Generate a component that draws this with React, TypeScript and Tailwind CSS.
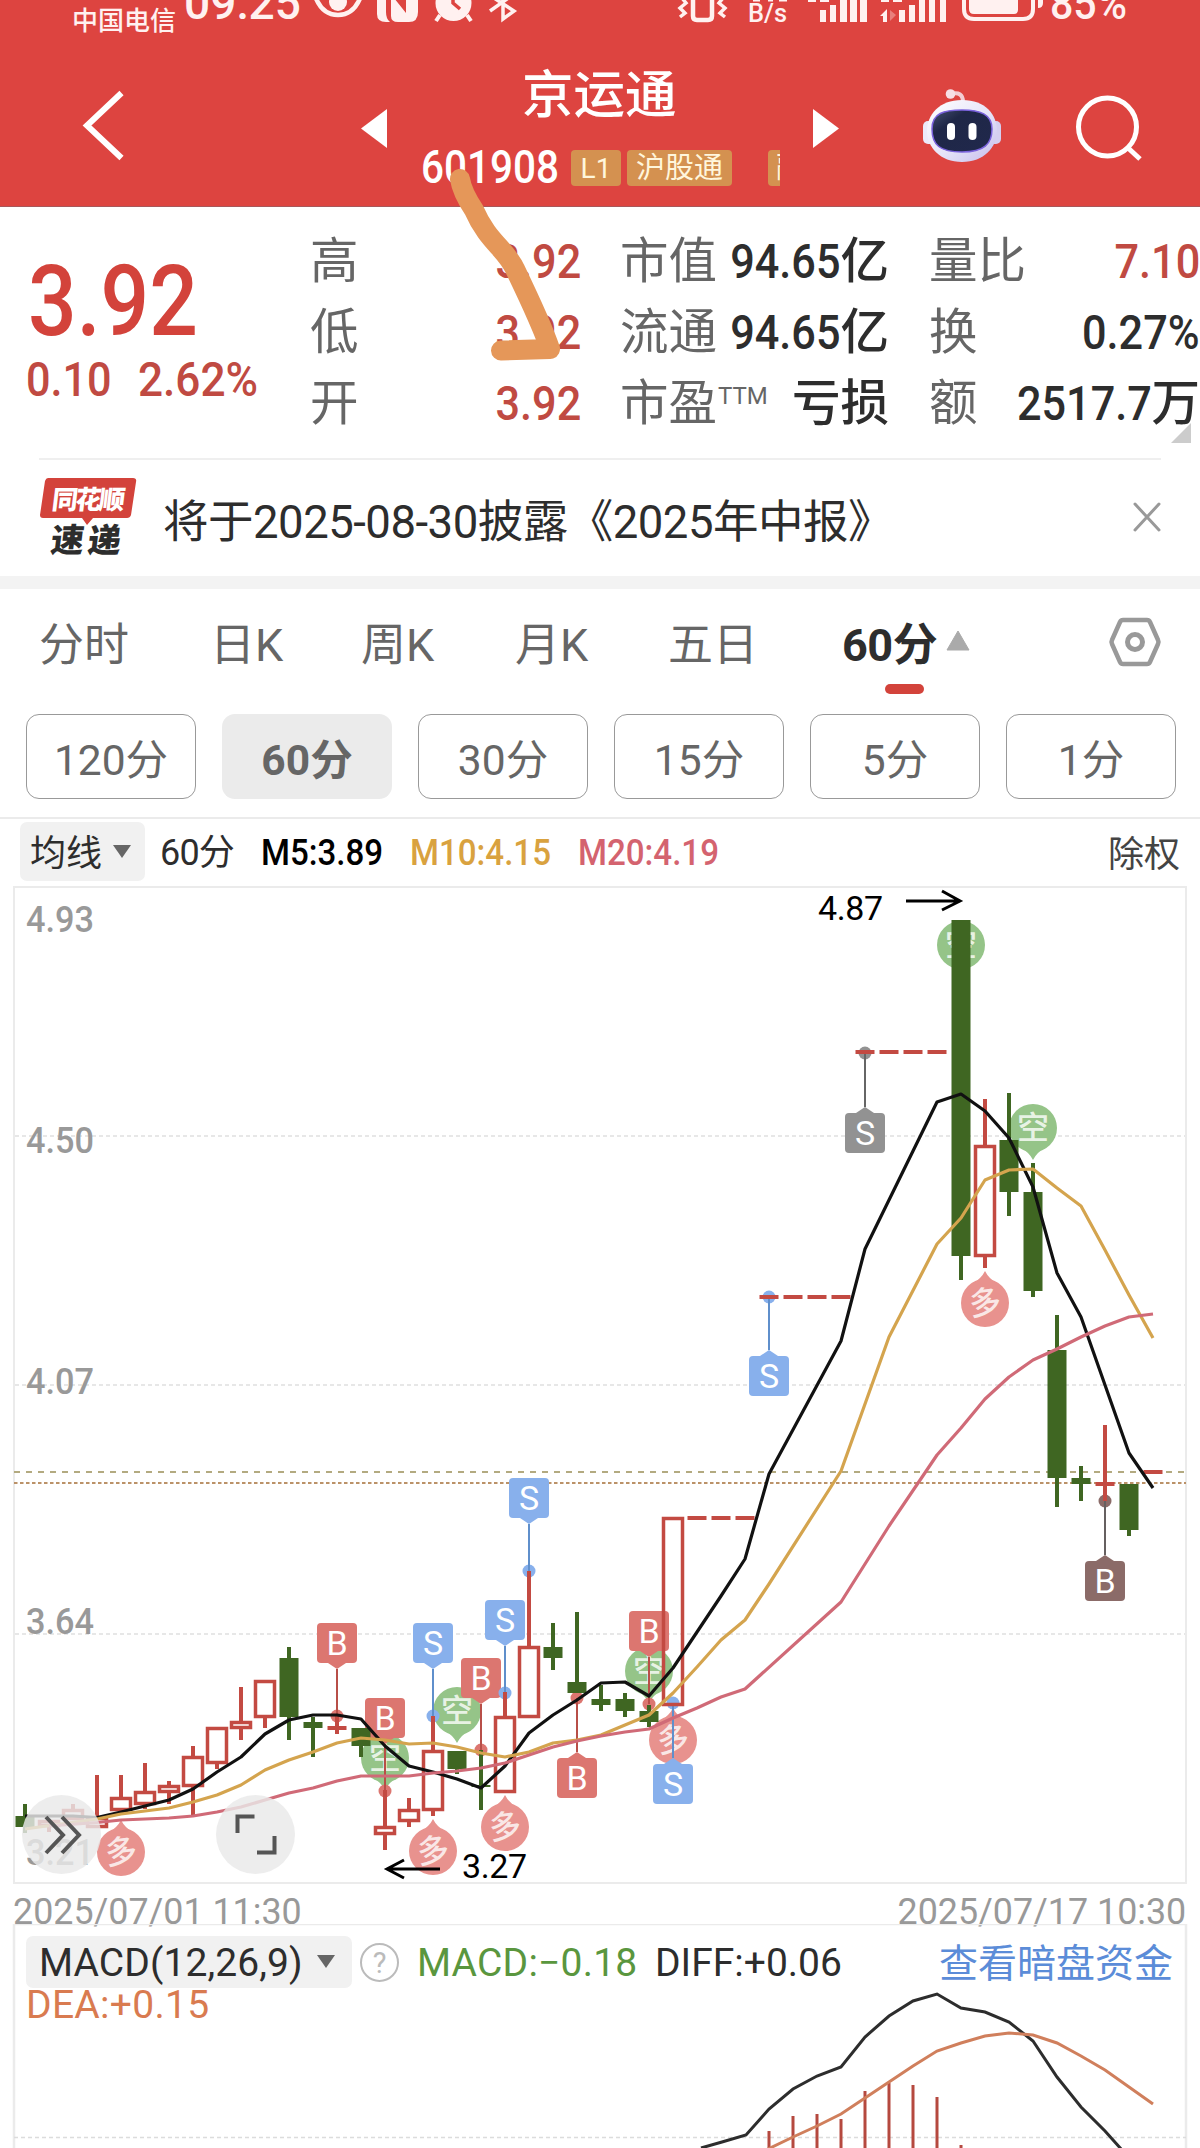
import type { ReactNode } from "react"

type Candle = { x: number; up: boolean; high: number; low: number; top: number; bottom: number }
type Flag = { x: number; top: number; dot: number; label: string; color: string; line: string }

const RED = "#c34a42"
const GREEN = "#3f6622"

const rawCandles: [number, number, number, number, number, number][] = [
  // index, rising, high, low, body top, body bottom
  [0, 0, 1804, 1833, 1816, 1827],
  [1, 1, 1820, 1832, 1820, 1827],
  [2, 1, 1804, 1820, 1809, 1820],
  [3, 1, 1775, 1828, 1817, 1828],
  [4, 1, 1775, 1811, 1797, 1811],
  [5, 1, 1763, 1809, 1791, 1805],
  [6, 1, 1781, 1804, 1785, 1793],
  [7, 1, 1746, 1815, 1756, 1787],
  [8, 1, 1727, 1769, 1727, 1764],
  [9, 1, 1687, 1740, 1721, 1729],
  [10, 1, 1680, 1728, 1680, 1718],
  [11, 0, 1647, 1740, 1658, 1717],
  [12, 0, 1717, 1757, 1722, 1728],
  [13, 1, 1715, 1734, 1726, 1730],
  [14, 0, 1728, 1757, 1728, 1746],
  [15, 1, 1790, 1850, 1826, 1835],
  [16, 1, 1798, 1827, 1809, 1822],
  [17, 1, 1716, 1816, 1750, 1811],
  [18, 0, 1751, 1774, 1751, 1769],
  [19, 0, 1750, 1810, 1785, 1787],
  [20, 1, 1692, 1793, 1716, 1793],
  [21, 1, 1571, 1718, 1646, 1718],
  [22, 0, 1623, 1670, 1647, 1658],
  [23, 0, 1612, 1693, 1682, 1693],
  [24, 0, 1685, 1711, 1699, 1705],
  [25, 0, 1693, 1717, 1699, 1711],
  [26, 0, 1705, 1727, 1711, 1722],
  [27, 1, 1517, 1706, 1517, 1706],
  [28, 1, 1516, 1520, 1516, 1520],
  [29, 1, 1516, 1520, 1516, 1520],
  [30, 1, 1516, 1520, 1516, 1520],
  [31, 1, 1295, 1299, 1295, 1299],
  [32, 1, 1295, 1299, 1295, 1299],
  [33, 1, 1295, 1299, 1295, 1299],
  [34, 1, 1295, 1299, 1295, 1299],
  [35, 1, 1050, 1054, 1050, 1054],
  [36, 1, 1050, 1054, 1050, 1054],
  [37, 1, 1050, 1054, 1050, 1054],
  [38, 1, 1050, 1054, 1050, 1054],
  [39, 0, 920, 1280, 920, 1256],
  [40, 1, 1099, 1268, 1145, 1257],
  [41, 0, 1093, 1216, 1140, 1192],
  [42, 0, 1163, 1297, 1192, 1291],
  [43, 0, 1315, 1507, 1350, 1478],
  [44, 0, 1466, 1501, 1478, 1484],
  [45, 1, 1425, 1501, 1482, 1486],
  [46, 0, 1484, 1536, 1484, 1530],
  [47, 1, 1470, 1474, 1470, 1474],
]

const candles: Candle[] = rawCandles.map(([i, up, high, low, top, bottom]) => ({ x: 25 + i * 24, up: up === 1, high, low, top, bottom }))

const B = { label: "B", color: "#dc7670", line: "#b84f48" }
const S = { label: "S", color: "#88b0ec", line: "#5f8fcb" }

const flags: Flag[] = [
  { x: 337, top: 1623, dot: 1716, ...B },
  { x: 385, top: 1698, dot: 1791, ...B },
  { x: 433, top: 1623, dot: 1716, ...S },
  { x: 481, top: 1658, dot: 1750, ...B },
  { x: 505, top: 1600, dot: 1693, ...S },
  { x: 529, top: 1478, dot: 1571, ...S },
  { x: 577, top: 1758, dot: 1698, ...B },
  { x: 649, top: 1611, dot: 1704, ...B },
  { x: 673, top: 1764, dot: 1703, ...S },
  { x: 769, top: 1356, dot: 1297, ...S },
  { x: 865, top: 1113, dot: 1053, label: "S", color: "#929292", line: "#666666" },
  { x: 1105, top: 1561, dot: 1501, label: "B", color: "#8b6b68", line: "#666060" },
]

const bubbles = [
  { x: 121, y: 1852, text: "多" },
  { x: 385, y: 1758, text: "空" },
  { x: 433, y: 1851, text: "多" },
  { x: 457, y: 1711, text: "空" },
  { x: 505, y: 1827, text: "多" },
  { x: 649, y: 1671, text: "空" },
  { x: 673, y: 1740, text: "多" },
  { x: 961, y: 945, text: "空" },
  { x: 985, y: 1303, text: "多" },
  { x: 1033, y: 1128, text: "空" },
]

const ma5 = "25,1816 73,1816 97,1817.5 121,1812 145,1806 169,1800 193,1789 217,1772 241,1757 265,1734 289,1720 313,1715 337,1715 361,1719 385,1746 409,1766 433,1772 457,1779 481,1788 505,1766 529,1733 553,1715 577,1700 601,1683 625,1682 649,1696 673,1668 697,1632 721,1596 745,1559 769,1474 841,1341 865,1249 937,1102 961,1094 985,1111 1009,1138 1033,1187 1057,1273 1081,1317 1105,1385 1129,1453 1153,1488"
const ma10 = "25,1829 97,1819 121,1814 145,1811 169,1808 193,1802 217,1795 241,1785 265,1770 289,1760 313,1752 337,1743 361,1738 385,1740 409,1744 433,1743 457,1747 481,1753 505,1757 529,1752 553,1743 577,1740 601,1735 625,1725 649,1715 673,1693 697,1667 721,1640 745,1620 769,1584 841,1471 889,1337 937,1244 961,1218 985,1180 1009,1170 1033,1169 1057,1188 1081,1206 1105,1250 1129,1295 1153,1338"
const ma20 = "49,1826 97,1822.5 121,1820 145,1819 169,1818 193,1816 217,1812 241,1807 265,1800 289,1793 313,1788 337,1781 361,1776 409,1776 433,1773 457,1771 481,1768 505,1763 529,1755 553,1747 577,1741 601,1736 625,1732 649,1729 673,1718 697,1708 721,1697 745,1689 841,1602 889,1526 937,1455 961,1428 985,1399 1009,1377 1033,1360 1057,1349 1081,1337 1105,1326 1129,1317 1153,1314"
const diff = "701,2148 722,2142 746,2135 769,2109 793,2089 817,2076 841,2067 865,2037 889,2016 913,2001 937,1994 961,2008 985,2012 1009,2022 1033,2041 1057,2077 1081,2107 1105,2131 1122,2150"
const dea = "766,2150 793,2137 817,2126 841,2114 865,2098 889,2082 913,2066 937,2051 961,2043 985,2036 1009,2033 1033,2035 1057,2043 1081,2056 1105,2070 1129,2087 1153,2104"
const macdBars = [[769, 2131], [793, 2116], [817, 2114], [841, 2119], [865, 2091], [889, 2083], [913, 2085], [937, 2097], [961, 2145]]

const axisLabels: [string, number][] = [["4.93", 932], ["4.50", 1153], ["4.07", 1394], ["3.64", 1634], ["3.21", 1865]]

function StatusBar() {
  return (
    <svg className="absolute left-0 top-0" width="1200" height="36" viewBox="0 0 1200 36" fill="#fff1f0">
      <text x="72" y="29.5" fontSize="26" fontWeight="500" textLength="104">中国电信</text>
      <text x="184" y="19" fontSize="46" fontWeight="500" textLength="117" lengthAdjust="spacingAndGlyphs">09:25</text>
      <path d="M315-4Q322 15 338 15T361-4" fill="none" stroke="#fff1f0" strokeWidth="4.5" />
      <circle cx="338" cy="2" r="9" />
      <path d="M377-4V14Q377 22 386 22H390Q386 19 386 12V-4ZM391-4V16Q391 22 398 22H409Q418 22 418 12V-4H406V13L394-2V-4Z" />
      <circle cx="453.5" cy="3" r="18" />
      <path d="M440 15L436 21M467 15L471 21" stroke="#fff1f0" strokeWidth="4" />
      <path d="M453-4V3L460 9" fill="none" stroke="#dd4440" strokeWidth="3.5" />
      <path d="M490 11L514-6M503-6V19L514 11L494-2" fill="none" stroke="#fff1f0" strokeWidth="3.5" />
      <path d="M693-4V16Q693 20 697 20H708Q712 20 712 16V-4" fill="none" stroke="#fff1f0" strokeWidth="4.5" />
      <path d="M682-2L686 3L680 8L685 13L680 17M723-2L719 3L725 8L720 13L725 17" fill="none" stroke="#fff1f0" strokeWidth="3.5" />
      <text x="748" y="22" fontSize="25" fontWeight="500" textLength="39" lengthAdjust="spacingAndGlyphs">B/s</text>
      <path d="M753 0h7v1.500h-7zM768 0h5v1.500h-5zM779 0h8v1.500h-8zM808 0h8v2h-8zM820 0h9v2h-9zM881 0h8v2h-8zM893 0h9v2h-9z" />
      <path d="M820 10h6v12h-6zM830 5h6v17h-6zM840 0h7v22h-7zM850 0h7v22h-7zM860 0h7v22h-7z" />
      <path d="M887 9v13h-4v-6h-3zM899 10h6v12h-6zM909 5h6v17h-6zM919 0h6v22h-6zM929 0h6v22h-6zM940 0h6v22h-6z" />
      <path d="M890 10l6 5l-6 6z" opacity=".35" />
      <path d="M964-4V9Q964 19 974 19H1023Q1033 19 1033 9V-4" fill="none" stroke="#fff1f0" strokeWidth="4" />
      <path d="M969-4H1018V10Q1018 14 1014 14H974Q969 14 969 9ZM1038 0h5v3q0 5-5 5z" />
      <text x="1050" y="19" fontSize="45" fontWeight="500" textLength="77" lengthAdjust="spacingAndGlyphs">85%</text>
    </svg>
  )
}

function Robot() {
  return (
    <svg width="80" height="76" viewBox="0 0 80 76">
      <defs>
        <linearGradient id="shell" x1="0" y1="0" x2="1" y2="1">
          <stop offset="0" stopColor="#ffffff" />
          <stop offset=".55" stopColor="#e6e4f8" />
          <stop offset="1" stopColor="#c5bcec" />
        </linearGradient>
        <linearGradient id="visor" x1="0" y1="0" x2="1" y2="1">
          <stop offset="0" stopColor="#44506f" />
          <stop offset=".3" stopColor="#1f2747" />
          <stop offset="1" stopColor="#20284c" />
        </linearGradient>
      </defs>
      <path d="M29 6Q41 3 41 14" fill="none" stroke="#f3cdd3" strokeWidth="4" />
      <circle cx="28.500" cy="6" r="4.800" fill="#f6dfe5" />
      <rect x="1" y="33" width="12" height="23" rx="5" fill="#eceafa" />
      <rect x="67" y="33" width="12" height="23" rx="5" fill="#d5cff0" />
      <path d="M40 12C64 12 75 27 75 43S62 74 40 74S5 59 5 43S17 12 40 12Z" fill="url(#shell)" />
      <path d="M40 22C58 22 70 26 70 41S62 64 40 64S10 57 10 41S22 22 40 22Z" fill="url(#visor)" stroke="#7a62dc" strokeWidth="1.500" />
      <rect x="25" y="35" width="8" height="17" rx="4" fill="#fff" />
      <rect x="46.500" y="35" width="8" height="17" rx="4" fill="#fff" />
    </svg>
  )
}

function Header() {
  return (
    <header className="relative flex h-[207px] shrink-0 items-start overflow-hidden border-b border-[#a8575a] bg-[#dd4440] text-white">
      <StatusBar />
      <svg className="ml-[81px] mt-[88px]" width="46" height="76" viewBox="0 0 46 76">
        <path d="M40.500 5L6 37.500L40.500 70" fill="none" stroke="#fff" strokeWidth="6" />
      </svg>
      <svg className="ml-[234px] mt-[109px]" width="26" height="39" viewBox="0 0 26 39"><path d="M0 19.500L26 0V39Z" fill="#fff" /></svg>
      <div className="ml-[34px] w-[359px] pt-[69px]">
        <div className="pl-[101px] text-[51.5px] font-medium leading-[54px]">京运通</div>
        <div className="mt-[27px] flex h-[36px] items-center overflow-hidden whitespace-nowrap">
          <span className="w-[150px] shrink-0 pt-[3px]"><span className="inline-block origin-left scale-x-[.88] text-[46px] font-medium leading-[36px]">601908</span></span>
          <span className="flex h-[36px] w-[50px] shrink-0 items-center justify-center rounded-[4px] bg-[#d49150] pt-[2px] text-[28px] text-[#fff6dc]">L1</span>
          <span className="ml-[6px] flex h-[36px] w-[105px] shrink-0 items-center justify-center rounded-[4px] bg-[#d49150] pt-[2px] text-[29px] text-[#fff6dc]">沪股通</span>
          <span className="ml-[36px] flex h-[36px] w-[12px] shrink-0 items-center overflow-hidden rounded-l-[4px] bg-[#d49150] pl-[8px] pt-[2px] text-[29px] text-[#fff6dc]">融</span>
        </div>
      </div>
      <svg className="ml-[33px] mt-[109px]" width="26" height="39" viewBox="0 0 26 39"><path d="M26 19.500L0 0V39Z" fill="#fff" /></svg>
      <div className="ml-[83px] mt-[88px]"><Robot /></div>
      <svg className="ml-[72px] mt-[94px]" width="70" height="70" viewBox="0 0 70 70">
        <ellipse cx="33.500" cy="33" rx="29" ry="29" fill="none" stroke="#fff" strokeWidth="5" />
        <path d="M53 53L66 65" stroke="#fff" strokeWidth="5" />
      </svg>
    </header>
  )
}

function QuoteRow({ label, sup, children }: { label: string; sup?: string; children: ReactNode }) {
  return (
    <div className="flex h-[71px] items-center justify-between">
      <span className="flex text-[48.5px] leading-[47px] text-[#666]">{label}{sup && <span className="ml-px mt-[4px] text-[24px] leading-[24px]">{sup}</span>}</span>
      <span className="flex text-[48.5px] font-medium leading-[47px]">{children}</span>
    </div>
  )
}

function Num({ children }: { children: string }) {
  return <span className="inline-block origin-right scale-x-90 text-[48px]">{children}</span>
}

function Quote() {
  return (
    <section className="flex h-[251px] shrink-0 pt-[19px] text-[#2d2d2d]">
      <div className="w-[310px] pl-[26px]">
        <div className="ml-[2px] mt-[26px] origin-left scale-x-[.865] text-[99px] font-medium leading-[98px] text-[#d3433b]">3.92</div>
        <div className="mt-[6px] flex text-[48px] font-medium leading-[48px] text-[#c04a42]">
          <span className="w-[112px]"><span className="inline-block origin-left scale-x-90">0.10</span></span>
          <span className="inline-block origin-left scale-x-[.92]">2.62%</span>
        </div>
      </div>
      <div className="w-[271px] text-[#c04a42]">
        <QuoteRow label="高"><Num>3.92</Num></QuoteRow>
        <QuoteRow label="低"><Num>3.92</Num></QuoteRow>
        <QuoteRow label="开"><Num>3.92</Num></QuoteRow>
      </div>
      <div className="ml-[39px] w-[269px]">
        <QuoteRow label="市值"><Num>94.65</Num>亿</QuoteRow>
        <QuoteRow label="流通"><Num>94.65</Num>亿</QuoteRow>
        <QuoteRow label="市盈" sup="TTM">亏损</QuoteRow>
      </div>
      <div className="relative ml-[40px] w-[271px]">
        <QuoteRow label="量比"><span className="text-[#c04a42]"><Num>7.10</Num></span></QuoteRow>
        <QuoteRow label="换"><Num>0.27%</Num></QuoteRow>
        <QuoteRow label="额"><Num>2517.7</Num>万</QuoteRow>
        <svg className="absolute left-[242px] top-[197px]" width="20" height="20" viewBox="0 0 20 20"><path d="M20 0V20H0Z" fill="#ccc" /></svg>
      </div>
    </section>
  )
}

function News() {
  return (
    <section className="mx-[39px] flex h-[118px] shrink-0 items-start border-t-2 border-[#efefef] text-[#2d2d2d]">
      <svg className="mt-[17px]" width="100" height="82" viewBox="0 0 100 82">
        <path d="M9 1H94Q98 1 97 5L92 38Q91 41 88 41H54L48 48L43 41H4Q1 41 1 38L6 4Q7 1 9 1Z" fill="#d3433b" />
        <text x="16" y="32" fontSize="26" fontWeight="900" fill="#fff" textLength="73" transform="skewX(-7)">同花顺</text>
        <text x="20" y="75" fontSize="33" fontWeight="900" fill="#2d2d2d" textLength="70" transform="skewX(-7)">速递</text>
      </svg>
      <p className="ml-[24px] mt-[40px] w-[800px] whitespace-nowrap text-[45.5px] leading-[45px] tracking-[-0.5px]">将于2025-08-30披露《2025年中报》</p>
      <svg className="ml-auto mt-[42px]" width="28" height="30" viewBox="0 0 28 30"><path d="M2 2L26 28M26 2L2 28" stroke="#999" strokeWidth="3" strokeLinecap="round" /></svg>
    </section>
  )
}

function Tabs() {
  return (
    <nav className="flex h-[125px] shrink-0 items-start pl-[39px] pt-[33px] text-[45px] leading-[48px] text-[#666]">
      <span className="w-[171px]">分时</span>
      <span className="w-[151px]">日K</span>
      <span className="w-[154px]">周K</span>
      <span className="w-[153px]">月K</span>
      <span className="w-[174px]">五日</span>
      <div className="relative flex font-bold text-[#2d2d2d]">
        <span className="tracking-[-0.5px]">60分</span>
        <svg className="ml-[9px] mt-[8px]" width="24" height="21" viewBox="0 0 24 21"><path d="M12 1L23 20H1Z" fill="#aaa" stroke="#aaa" strokeLinejoin="round" /></svg>
        <span className="absolute left-[43px] top-[62px] h-[10px] w-[39px] rounded-full bg-[#d3433b]" />
      </div>
      <svg className="ml-auto mr-[38px] mt-[-6px]" width="54" height="52" viewBox="0 0 54 52">
        <path d="M15 4H39Q41 4 42 6L50 24Q51 26 50 28L42 46Q41 48 39 48H15Q13 48 12 46L4 28Q3 26 4 24L12 6Q13 4 15 4Z" fill="none" stroke="#999" strokeWidth="4.500" />
        <circle cx="27" cy="26" r="7.500" fill="none" stroke="#999" strokeWidth="5" />
      </svg>
    </nav>
  )
}

function Periods() {
  return (
    <div className="flex h-[105px] shrink-0 gap-[26px] border-b-2 border-[#ebebeb] pl-[26px] text-[42.5px] leading-[42px] text-[#666]">
      {["120分", "60分", "30分", "15分", "5分", "1分"].map((name) => (
        <button key={name} className={name === "60分" ? "flex h-[85px] w-[170px] items-center justify-center rounded-[13px] bg-[#ebebeb] pt-[8px] font-bold" : "flex h-[85px] w-[170px] items-center justify-center rounded-[13px] border border-[#999] pt-[8px]"}>{name}</button>
      ))}
    </div>
  )
}

function AverageRow() {
  return (
    <div className="flex h-[66px] shrink-0 items-center pb-[1px] text-[36px] leading-[36px] text-[#2d2d2d]">
      <div className="ml-[20px] flex h-[59px] w-[125px] items-center rounded-[7px] bg-[#f1f1f1] pl-[10px] text-[36px]">
        <span className="pt-[5px]">均线</span>
        <svg className="ml-[10px]" width="20" height="14" viewBox="0 0 20 14"><path d="M1 0H19L10 13Z" fill="#666" /></svg>
      </div>
      <span className="ml-[15px] w-[101px] pt-[2px] tracking-[-0.8px]">60分</span>
      <span className="w-[149px] pt-[2px]"><span className="inline-block origin-left scale-x-[.92] font-medium text-black">M5:3.89</span></span>
      <span className="w-[168px] pt-[2px]"><span className="inline-block origin-left scale-x-[.92] font-medium text-[#d9a23f]">M10:4.15</span></span>
      <span className="inline-block origin-left scale-x-[.92] pt-[2px] font-medium text-[#d4636f]">M20:4.19</span>
      <span className="ml-auto mr-[20px] pt-[6px] text-[#444]">除权</span>
    </div>
  )
}

function FlagMark({ x, top, dot, label, color, line }: Flag) {
  const above = top < dot
  const edge = above ? top + 40 : top
  const tip = above ? edge + 6 : edge - 6
  return (
    <g>
      <circle cx={x} cy={dot} r="6.500" fill={color} />
      <path d={`M${x} ${tip}V${dot}`} stroke={line} strokeWidth="2" />
      <rect x={x - 20} y={top} width="40" height="40" rx="4" fill={color} />
      <path d={`M${x - 9} ${edge}L${x} ${tip}L${x + 9} ${edge}Z`} fill={color} />
      <text x={x} y={top + 32} fontSize="34" fill="#fff" textAnchor="middle">{label}</text>
    </g>
  )
}

function Bubble({ x, y, text }: { x: number; y: number; text: string }) {
  const bear = text === "空"
  const fill = bear ? "#95c488" : "#e8928e"
  const s = bear ? 1 : -1
  return (
    <g>
      <circle cx={x} cy={y} r="24" fill={fill} />
      <path d={`M${x - 12} ${y + 20 * s}Q${x - 4} ${y + 24 * s} ${x} ${y + 32 * s}Q${x + 4} ${y + 24 * s} ${x + 12} ${y + 20 * s}Z`} fill={fill} />
      <text x={x} y={y + 11} fontSize="32" fontWeight="500" fill="#fff" fillOpacity=".8" textAnchor="middle" transform={bear ? undefined : `rotate(-8 ${x} ${y})`}>{text}</text>
    </g>
  )
}

function CandleMark({ x, up, high, low, top, bottom }: Candle) {
  if (!up) {
    return (
      <g fill={GREEN}>
        <rect x={x - 2} y={high} width="4" height={low - high} />
        <rect x={x - 9.5} y={top} width="19" height={bottom - top} />
      </g>
    )
  }
  if (bottom - top <= 5) {
    return (
      <g fill={RED}>
        <rect x={x - 2} y={high} width="4" height={low - high} />
        <rect x={x - 9.5} y={top} width="19" height={bottom - top} />
      </g>
    )
  }
  return (
    <g>
      <path d={`M${x} ${high}V${top}M${x} ${bottom}V${low}`} stroke={RED} strokeWidth="4" />
      <rect x={x - 9.5} y={top + 1.5} width="19" height={bottom - top - 3} fill="none" stroke={RED} strokeWidth="3.5" />
    </g>
  )
}

function KChart() {
  return (
    <svg className="block shrink-0" width="1200" height="999" viewBox="0 885 1200 999">
      <rect x="14" y="887" width="1172" height="996" fill="none" stroke="#ebebeb" strokeWidth="2" />
      {[1136, 1385, 1634].map((y) => (
        <path key={y} d={`M15 ${y}H1185`} stroke="#dfdfdf" strokeWidth="1.500" strokeDasharray="4 3" />
      ))}
      {axisLabels.map(([value, y]) => (
        <text key={value} x="26" y={y} fontSize="37" fontWeight="500" fill="#999" textLength="68" lengthAdjust="spacingAndGlyphs">{value}</text>
      ))}
      <path d="M14 1472H1186" stroke="#b3aa80" strokeWidth="2" strokeDasharray="6 6" />
      <path d="M14 1483H1186" stroke="#bb9268" strokeWidth="2" strokeDasharray="3.500 2.500" />
      {bubbles.map((b) => <Bubble key={`${b.x}-${b.y}`} {...b} />)}
      {flags.map((f) => <FlagMark key={f.x} {...f} />)}
      {candles.map((c) => <CandleMark key={c.x} {...c} />)}
      <g fill="none" strokeWidth="3.200" strokeLinejoin="round">
        <polyline points={ma5} stroke="#111" />
        <polyline points={ma10} stroke="#d4a44e" />
        <polyline points={ma20} stroke="#d06a77" />
      </g>
      <g fontSize="34" fill="#000">
        <text x="818" y="920" textLength="65">4.87</text>
        <text x="462" y="1878" textLength="65">3.27</text>
      </g>
      <path d="M906 901H960M942 891L960 901L942 910M440 1869H387M404 1860L387 1869L404 1878" fill="none" stroke="#000" strokeWidth="3" />
      <circle cx="61.500" cy="1834.500" r="39.500" fill="#e9e9e9" fillOpacity=".82" />
      <circle cx="255.500" cy="1834.500" r="39.500" fill="#e9e9e9" fillOpacity=".82" />
      <path d="M46 1817L63 1835L46 1853M62 1817L79 1835L62 1853M254.500 1816.500H237.500V1833M257 1852.500H274.500V1836" fill="none" stroke="#555" strokeWidth="4" />
    </svg>
  )
}

function Macd() {
  return (
    <section className="relative h-[224px] shrink-0">
      <svg className="absolute left-0 top-0" width="1200" height="224" viewBox="0 1924 1200 224">
        <path d="M14 2150V1924H1186V2150" fill="none" stroke="#ebebeb" strokeWidth="2.500" />
        <path d="M14 2137.500H1186" stroke="#dcdcdc" strokeWidth="1.500" strokeDasharray="4 3" />
        {macdBars.map(([x, y]) => <rect key={x} x={x - 1.5} y={y} width="3" height={2150 - y} fill="#b5493f" />)}
        <polyline points={diff} fill="none" stroke="#2d2d2d" strokeWidth="3" />
        <polyline points={dea} fill="none" stroke="#d07f5c" strokeWidth="3" />
      </svg>
      <div className="relative pl-[26px] pt-[12px] text-[39px] leading-[38px] text-[#2d2d2d]">
        <div className="flex h-[52px] items-center whitespace-nowrap">
          <div className="flex h-[52px] w-[326px] items-center rounded-[7px] bg-[#f1f1f1] pl-[13px]">
            <span className="w-[277px] pt-[2px] tracking-[0.1px]">MACD(12,26,9)</span>
            <svg width="20" height="14" viewBox="0 0 20 14"><path d="M1 0H19L10 13Z" fill="#666" /></svg>
          </div>
          <span className="ml-[8px] flex h-[39px] w-[39px] items-center justify-center rounded-full border-2 border-[#bbb] pt-[2px] text-[29px] text-[#bbb]">?</span>
          <span className="ml-[18px] w-[238px] pt-[2px] tracking-[0.2px] text-[#5a963e]">MACD:−0.18</span>
          <span className="pt-[2px]">DIFF:+0.06</span>
          <span className="ml-auto mr-[27px] pt-[4px] text-[39px] text-[#5b8cd8]">查看暗盘资金</span>
        </div>
        <div className="mt-[-2px] tracking-[0.3px] text-[#d97b50]">DEA:+0.15</div>
      </div>
    </section>
  )
}

export default function App() {
  return (
    <div className="relative flex h-[2148px] w-[1200px] flex-col overflow-hidden bg-white font-['Roboto','Noto_Sans_CJK_SC',sans-serif]">
      <Header />
      <Quote />
      <News />
      <div className="h-[13px] shrink-0 bg-[#f3f3f3]" />
      <Tabs />
      <Periods />
      <AverageRow />
      <KChart />
      <div className="flex h-[40px] shrink-0 items-center justify-between pl-[13px] pr-[14px] pt-[14px] text-[37px] leading-[37px] text-[#999]">
        <span className="origin-left scale-x-[.968]">2025/07/01 11:30</span>
        <span className="origin-right scale-x-[.968]">2025/07/17 10:30</span>
      </div>
      <Macd />
      {/* hand-drawn arrow over the header and the price columns */}
      <svg className="absolute left-[440px] top-[160px]" width="140" height="210" viewBox="440 160 140 210">
        <path d="M460 179Q462 192 474 210C488 242 505 248 515 269C528 296 542 325 550 349L501 350.500" fill="none" stroke="#e59759" strokeWidth="20" strokeLinecap="round" strokeLinejoin="round" />
      </svg>
    </div>
  )
}
